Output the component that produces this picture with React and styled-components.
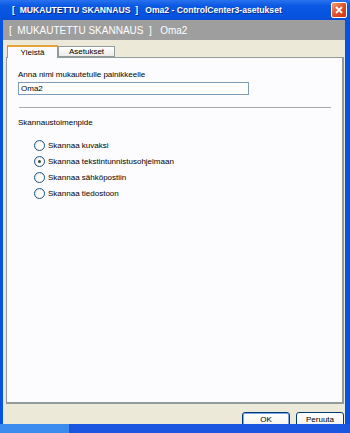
import React from 'react';
import styled, { createGlobalStyle } from 'styled-components';

const Global = createGlobalStyle`
  html, body { margin: 0; padding: 0; overflow: hidden; }
  body { width: 350px; height: 433px; font-family: "Liberation Sans", Arial, sans-serif; }
`;

const Screen = styled.div`
  width: 350px;
  height: 433px;
  display: flex;
  flex-direction: column;
  overflow: hidden;
`;

const TitleBar = styled.div`
  height: 20px;
  flex: none;
  display: flex;
  align-items: center;
  justify-content: space-between;
  padding: 0 3px 0 12px;
  background: linear-gradient(#2a73ee, #0a58e2 30%, #0553e0 80%, #0a4fd0);
  color: #fff;
  font-weight: bold;
  font-size: 8.6px;
  white-space: nowrap;
  text-shadow: 1px 1px 0 #0a2a8a;
`;

const CloseButton = styled.div`
  width: 14px;
  height: 14px;
  border: 1px solid #fff;
  border-radius: 2px;
  background: linear-gradient(135deg, #f0a080, #e0502a 50%, #c83a14);
  display: flex;
  align-items: center;
  justify-content: center;
`;

const Frame = styled.div`
  flex: 1;
  display: flex;
  flex-direction: column;
  border-left: 3px solid #0553e0;
  border-right: 5px solid #0553e0;
  background: #ece9d8;
  min-height: 0;
  overflow: hidden;
`;

const Banner = styled.div`
  height: 20px;
  flex: none;
  display: flex;
  align-items: center;
  padding-left: 6px;
  background: #9e9e9e;
  color: #fff;
  font-size: 10px;
  white-space: nowrap;
`;

const Tabs = styled.div`
  display: flex;
  align-items: flex-end;
  margin: 3px 0 0 4px;
  height: 14px;
  flex: none;
`;

const Tab = styled.div`
  height: ${p => (p.$active ? '13px' : '11px')};
  width: ${p => p.$w}px;
  box-sizing: border-box;
  border: 1px solid #919b9c;
  border-bottom: ${p => (p.$active ? 'none' : '1px solid #919b9c')};
  border-top: ${p => (p.$active ? '2px solid #e8a23a' : '1px solid #919b9c')};
  background: ${p => (p.$active ? '#fcfcfe' : 'linear-gradient(#fff, #ecebe6)')};
  font-size: 8px;
  color: #000;
  display: flex;
  align-items: center;
  justify-content: center;
  position: relative;
  z-index: ${p => (p.$active ? 2 : 1)};
  margin-bottom: ${p => (p.$active ? '-1px' : '0')};
`;

const Panel = styled.div`
  margin: 0 1px 0 3px;
  height: 347px;
  flex: none;
  box-sizing: border-box;
  border: 1px solid #919b9c;
  border-right-width: 2px;
  border-bottom-width: 2px;
  background: #fcfcfe;
  padding: 12px 13px 0 11px;
  display: flex;
  flex-direction: column;
  font-size: 8px;
  color: #000;
`;

const Label = styled.div`
  line-height: 10px;
  margin-top: ${p => p.$top || 0}px;
`;

const TextBox = styled.div`
  width: 231px;
  height: 13px;
  box-sizing: border-box;
  border: 1px solid #7f9db9;
  background: #fff;
  margin-top: 2px;
  padding-left: 2px;
  display: flex;
  align-items: center;
`;

const Divider = styled.div`
  margin: 12px 1px 0 1px;
  width: 312px;
  height: 1px;
  background: #a7a6aa;
  box-shadow: 0 1px 0 #fff;
`;

const RadioList = styled.div`
  display: flex;
  flex-direction: column;
  gap: 5px;
  margin: 12px 0 0 16px;
`;

const RadioRow = styled.div`
  display: flex;
  align-items: center;
  gap: 3px;
  height: 11px;
`;

const Circle = styled.div`
  width: 11px;
  height: 11px;
  box-sizing: border-box;
  border-radius: 50%;
  border: 1px solid #1c5180;
  background: radial-gradient(circle at 60% 60%, #fff 40%, #dcd9d0);
  display: flex;
  align-items: center;
  justify-content: center;
  &::after {
    content: '';
    width: 3px;
    height: 3px;
    border-radius: 50%;
    background: #3a4a3a;
    display: ${p => (p.$on ? 'block' : 'none')};
  }
`;

const Buttons = styled.div`
  display: flex;
  justify-content: flex-end;
  gap: 6px;
  margin: 8px 1px 0 0;
`;

const Button = styled.div`
  width: 48px;
  height: 21px;
  box-sizing: border-box;
  border: 1px solid #003c74;
  border-radius: 3px;
  background: linear-gradient(#fff, #f2f1ea 70%, #d6d0c5);
  box-shadow: ${p => (p.$def ? 'inset 0 0 0 1px #7aa3e8' : 'none')};
  font-size: 8px;
  display: flex;
  justify-content: center;
  padding-top: 2px;
`;

const Taskbar = styled.div`
  height: 9px;
  flex: none;
  display: flex;
  background: #1a56e0;
`;

const StartArea = styled.div`
  width: 69px;
  background: #3c8cf0;
`;

const options = [
  'Skannaa kuvaksi',
  'Skannaa tekstintunnistusohjelmaan',
  'Skannaa sähköpostiin',
  'Skannaa tiedostoon',
];

export default function App() {
  return (
    <Screen>
      <Global />
      <TitleBar>
        <span>[&nbsp; MUKAUTETTU SKANNAUS &nbsp;]&nbsp;&nbsp; Oma2 - ControlCenter3-asetukset</span>
        <CloseButton>
          <svg width="10" height="10" viewBox="0 0 10 10">
            <path d="M2 2 L8 8 M8 2 L2 8" stroke="#fff" strokeWidth="1.8" />
          </svg>
        </CloseButton>
      </TitleBar>
      <Frame>
        <Banner>[&nbsp; MUKAUTETTU SKANNAUS &nbsp;]&nbsp;&nbsp; Oma2</Banner>
        <Tabs>
          <Tab $active $w={51}>Yleistä</Tab>
          <Tab $w={57}>Asetukset</Tab>
        </Tabs>
        <Panel>
          <Label>Anna nimi mukautetulle painikkeelle</Label>
          <TextBox>Oma2</TextBox>
          <Divider />
          <Label $top={10}>Skannaustoimenpide</Label>
          <RadioList>
            {options.map((o, i) => (
              <RadioRow key={o}>
                <Circle $on={i === 1} />
                <span>{o}</span>
              </RadioRow>
            ))}
          </RadioList>
        </Panel>
        <Buttons>
          <Button $def>OK</Button>
          <Button>Peruuta</Button>
        </Buttons>
      </Frame>
      <Taskbar>
        <StartArea />
      </Taskbar>
    </Screen>
  );
}
